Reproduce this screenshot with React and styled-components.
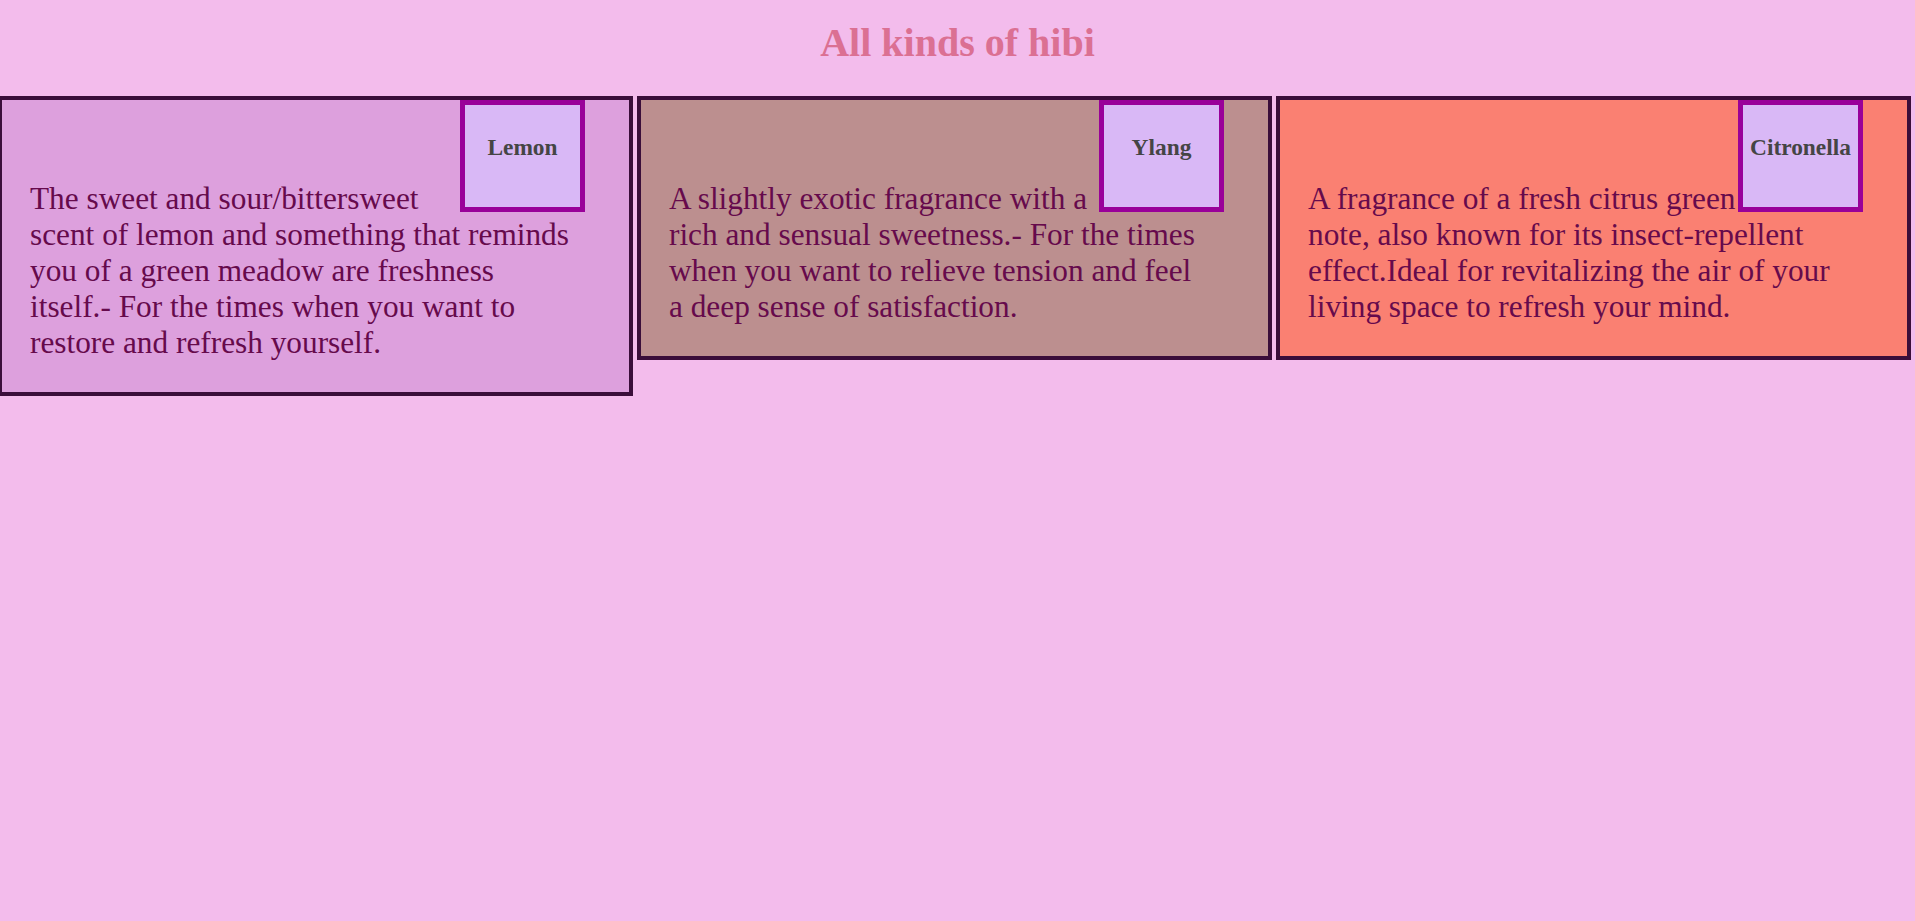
import React from 'react';
import styled, {createGlobalStyle} from 'styled-components';



const GlobalStl = createGlobalStyle`
  body {
    margin: 0;
    background-color: #f3bcec;
    font-family: "Liberation Serif", "Times New Roman", serif;
  }
`


const PageStl = styled.div`
  overflow: hidden;
`


const TitleStl = styled.h1`
  margin: 19px 0 30px;
  text-align: center;
  font-size: 40px;
  font-weight: 700;
  color: #db7093;
`


const RowStl = styled.div`
  display: flex;
  align-items: flex-start;
  gap: 4px;
  margin-left: -2px;
`


const CardStl = styled.div`
  box-sizing: border-box;
  width: 635px;
  flex-shrink: 0;
  padding: 0 28px;
  border: 4px solid #3a0e3a;
  background-color: ${props => props.bg};
`


const BadgeStl = styled.div`
  float: right;
  width: 115px;
  height: 102px;
  margin-right: 16px;
  border: 5px solid #990099;
  background-color: #d9b8f6;
`


const BadgeTextStl = styled.h3`
  margin: 29px 0 0;
  text-align: center;
  font-size: 23.4px;
  font-weight: 700;
  color: #454545;
`


const TextStl = styled.p`
  margin: 81px 30px 31px 0;
  font-size: 31.3px;
  line-height: 36px;
  color: #660a4c;
`


const oils = [
  {
    name: 'Lemon',
    bg: '#dda0dd',
    text: 'The sweet and sour/bittersweet scent of lemon and something that reminds you of a green meadow are freshness itself.- For the times when you want to restore and refresh yourself.'
  },
  {
    name: 'Ylang',
    bg: '#bc8f8f',
    text: 'A slightly exotic fragrance with a rich and sensual sweetness.- For the times when you want to relieve tension and feel a deep sense of satisfaction.'
  },
  {
    name: 'Citronella',
    bg: '#fa8072',
    text: 'A fragrance of a fresh citrus green note, also known for its insect-repellent effect.Ideal for revitalizing the air of your living space to refresh your mind.'
  }
]



export default function App() {
  return (
    <PageStl>
      <GlobalStl/>
      <TitleStl>All kinds of hibi</TitleStl>

      <RowStl>
        {
          oils.map(item => (
            <CardStl key={item.name} bg={item.bg}>
              <BadgeStl>
                <BadgeTextStl>{item.name}</BadgeTextStl>
              </BadgeStl>
              <TextStl>{item.text}</TextStl>
            </CardStl>
          ))
        }
      </RowStl>
    </PageStl>
  )
}
